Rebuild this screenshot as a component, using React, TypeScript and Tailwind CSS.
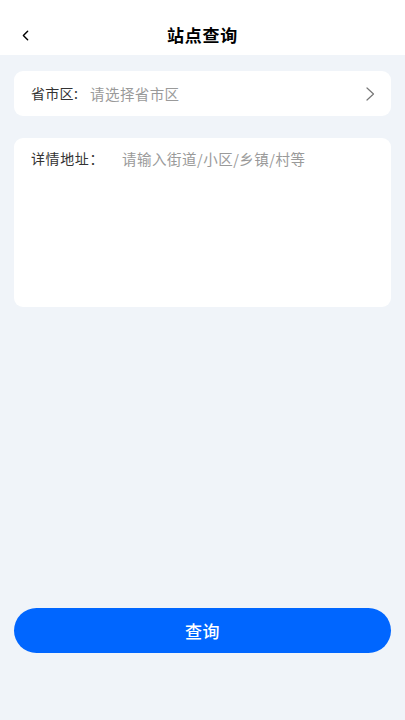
import { ChevronLeft } from 'lucide-react'

const FONT = { fontFamily: '"Noto Sans CJK SC", "Noto Sans", sans-serif' }

export default function App() {
  return (
    <div className="flex h-[720px] w-full flex-col bg-[#f0f4f9]" style={FONT}>
      <header className="relative flex h-[55px] items-end justify-center bg-white pb-[8px]">
        <button className="absolute left-[17px] top-[27px] text-black">
          <ChevronLeft size={17} strokeWidth={2} />
        </button>
        <h1 className="text-[17px] font-bold leading-[24px] tracking-[0.7px] text-black">站点查询</h1>
      </header>

      <main className="flex flex-1 flex-col px-[14px] pt-[16px]">
        <div className="flex h-[45px] items-center rounded-[9px] bg-white pl-[17px] pr-[16px]">
          <span className="text-[14px] tracking-[0.3px] text-[#333]">省市区:</span>
          <span className="ml-[12px] flex-1 text-[14.5px] tracking-[0.4px] text-[#9a9a9a]">请选择省市区</span>
          <svg width="9" height="14" viewBox="0 0 9 14" fill="none" className="text-[#777]">
            <path d="M1 1l6.5 6L1 13" stroke="currentColor" strokeWidth="1.2" strokeLinecap="round" strokeLinejoin="round" />
          </svg>
        </div>

        <div className="mt-[22px] flex h-[169px] items-start rounded-[9px] bg-white px-[17px] pt-[10px]">
          <span className="text-[14px] tracking-[0.6px] text-[#333]">详情地址：</span>
          <span className="ml-[18px] text-[14.5px] tracking-[0.5px] text-[#9a9a9a]">请输入街道/小区/乡镇/村等</span>
        </div>

        <div className="flex-1" />

        <button className="mb-[67px] flex h-[45px] w-full items-center justify-center rounded-full bg-[#0066ff] text-[17px] font-medium tracking-[0.5px] text-white">
          查询
        </button>
      </main>
    </div>
  )
}
